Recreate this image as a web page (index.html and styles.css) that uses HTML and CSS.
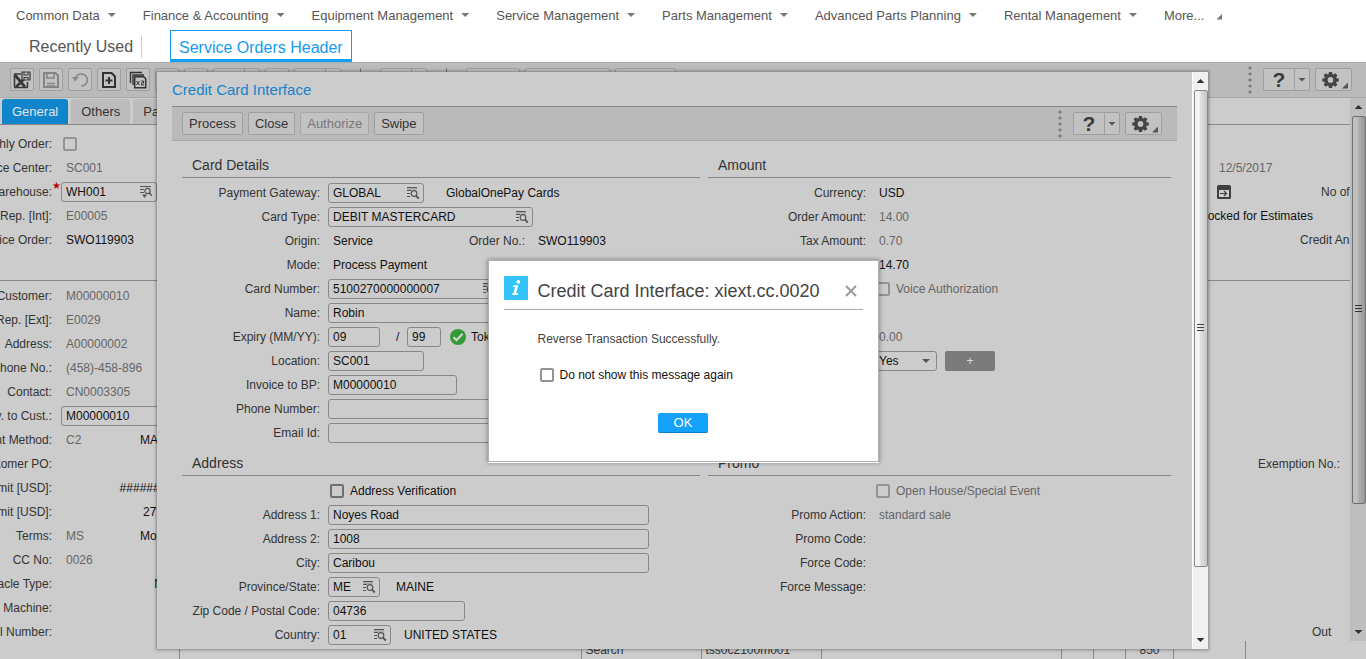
FILE: index.html
```html
<!DOCTYPE html>
<html lang="en">
<head>
<meta charset="utf-8">
<title>Service Orders Header</title>
<link rel="stylesheet" href="styles.css">
</head>
<body>
<svg class="sprite" aria-hidden="true">
  <symbol id="lookup" viewBox="0 0 14 14">
    <path d="M1 1.500h10M1 4.500h4M1 7.500h3M1 10.500h3" fill="none" stroke="#555" stroke-width="1"/>
    <path d="M1 3h10" stroke="#666" stroke-width=".6"/>
    <circle cx="8" cy="7.500" r="2.800" fill="none" stroke="#555" stroke-width="1.200"/>
    <path d="M10 9.700l2.800 2.800" stroke="#555" stroke-width="1.900"/>
  </symbol>
  <symbol id="lookup-down" viewBox="0 0 14 14">
    <path d="M1 1.500h11M1 4.500h4M1 7.500h4" fill="none" stroke="#555"/>
    <circle cx="8.500" cy="6" r="2.700" fill="none" stroke="#555" stroke-width="1.200"/>
    <path d="M10.300 8l2.500 2.800" stroke="#555" stroke-width="1.600"/>
    <path d="M3 9.500h5L5.500 13z" fill="#555"/>
  </symbol>
  <symbol id="gear" viewBox="0 0 18 18">
    <path fill="#444" fill-rule="evenodd" d="M7.400 1h3.200l.4 2.300 1.100.5 2-1.400 2.200 2.200-1.300 2 .4 1 2.400.400v3.100l-2.400.4-.4 1.100 1.300 1.900-2.200 2.300-2-1.400-1.100.500-.4 2.300H7.400L7 15.900l-1.100-.500-2 1.400-2.200-2.300L3 12.600l-.4-1.100L.3 11.100V8l2.300-.4.400-1-1.300-2 2.200-2.200 2 1.400L7 3.300zM9 6.400a3 3 0 1 0 0 6 3 3 0 0 0 0-6z"/>
  </symbol>
</svg>

<header class="top">
  <nav class="menu" aria-label="Modules">
    <a href="#common">Common Data<i class="caret"></i></a>
    <a href="#finance">Finance &amp; Accounting<i class="caret"></i></a>
    <a href="#equipment">Equipment Management<i class="caret"></i></a>
    <a href="#service">Service Management<i class="caret"></i></a>
    <a href="#parts">Parts Management<i class="caret"></i></a>
    <a href="#planning">Advanced Parts Planning<i class="caret"></i></a>
    <a href="#rental">Rental Management<i class="caret"></i></a>
    <a href="#more">More...<i class="corner"></i></a>
  </nav>
  <nav class="sessions" aria-label="Sessions">
    <a href="#recent" class="recent">Recently Used</a>
    <a href="#orders" class="session">Service Orders Header</a>
  </nav>
</header>

<main class="work">
  <div class="toolbar">
    <button class="tool" aria-label="Save and exit"><svg width="18" height="18" viewBox="0 0 18 18"><path d="M1 3h7M1 16.500h14M1.500 3v13M14.500 11v5" fill="none" stroke="#3a3a3a" stroke-width="1.600"/><path d="M2 4l10 12M12 7L3 16" fill="none" stroke="#3a3a3a" stroke-width="2.800"/><path d="M9 1h8v8H9z" fill="#c2c2c2" stroke="#3a3a3a" stroke-width="1.200"/><path d="M11 1v3h4V1M11 9V6.500h4V9" fill="none" stroke="#3a3a3a" stroke-width="1.100"/></svg></button>
    <button class="tool" aria-label="Save"><svg width="18" height="18" viewBox="0 0 18 18"><path d="M2 2h11.500L16 4.500V16H2z" fill="none" stroke="#858585" stroke-width="2"/><path d="M5 2v5h7V2M5 12.500h8M5 15h8" fill="none" stroke="#858585" stroke-width="1.500"/></svg></button>
    <button class="tool" aria-label="Undo"><svg width="18" height="18" viewBox="0 0 18 18"><path d="M4.500 7.500A6 6 0 1 1 10.500 15" fill="none" stroke="#8a8a8a" stroke-width="1.800"/><path d="M1 6h7l-4 4.500z" fill="#8a8a8a"/></svg></button>
    <button class="tool" aria-label="New"><svg width="18" height="18" viewBox="0 0 18 18"><path d="M3 2h8.500L15 5.500V16H3z" fill="none" stroke="#333" stroke-width="2"/><path d="M9 6v7M5.500 9.500h7" stroke="#333" stroke-width="2"/></svg></button>
    <button class="tool" aria-label="Duplicate"><svg width="18" height="18" viewBox="0 0 18 18"><path d="M1.500 12V1.500H13M4 14V4h11" fill="none" stroke="#333" stroke-width="1.400"/><path d="M5.700 5.700h9l2 2v9h-11z" fill="none" stroke="#333" stroke-width="1.500"/><path d="M7.500 10l3 4M10.500 10l-3 4M12.200 10h2.300v2h-2v2h2.500" fill="none" stroke="#333"/></svg></button>
    <button class="tool" aria-label="Delete"></button>
    <button class="tool" aria-label="Refresh"></button>
    <span class="split"><button aria-label="First"></button><button aria-label="First options"></button></span>
    <button class="tool" aria-label="Previous"></button>
    <span class="split"><button aria-label="Next"></button><button aria-label="Next options"></button></span>
    <i class="bar"></i>
    <span class="split"><button aria-label="Find"></button><button aria-label="Find options"></button></span>
    <i class="bar"></i>
    <button class="tool views" aria-label="Views"></button>
    <button class="tool references" aria-label="References"></button>
    <button class="tool actions" aria-label="Actions"></button>
    <div class="tail">
      <i class="dots"></i>
      <span class="split"><button class="help">?</button><button aria-label="Help options"><i class="caret"></i></button></span>
      <button class="tool settings" aria-label="Settings"><svg width="17" height="17"><use href="#gear"/></svg><i class="corner"></i></button>
    </div>
  </div>

  <div class="stage">
    <div class="page">
      <div class="tabs">
        <button class="tab on">General</button>
        <button class="tab">Others</button>
        <button class="tab">Parts</button>
      </div>
      <div class="cols first">
        <div>
          <div class="row"><label for="mo">Monthly Order:</label><input type="checkbox" id="mo" class="faint"></div>
          <div class="row"><span class="lab">Service Center:</span><span class="dim">SC001</span></div>
          <div class="row"><label for="wh">Warehouse:<b class="must">★</b></label><span class="field w96"><input id="wh" value="WH001"><button class="zoomer" aria-label="Look up"><svg width="14" height="14"><use href="#lookup-down"/></svg></button></span></div>
          <div class="row"><span class="lab">Service Rep. [Int]:</span><span class="dim">E00005</span></div>
          <div class="row"><span class="lab">Service Order:</span><span>SWO119903</span></div>
        </div>
        <div>
          <div class="row"></div>
          <div class="row side"><span class="dim date">12/5/2017</span></div>
          <div class="row side"><button class="cal" aria-label="Open calendar"><svg width="14" height="14" viewBox="0 0 14 14"><rect width="14" height="14" rx="1.500" fill="#3f3f3f"/><path d="M2 5h10v7H2z" fill="#ccc"/><path d="M3 8.500h6M7 6l2.500 2.500L7 11" fill="none" stroke="#3f3f3f" stroke-width="1.200"/></svg></button><span class="lines">No of Lines:</span></div>
          <div class="row side">Blocked for Estimates</div>
          <div class="row side"><span class="analyst">Credit Analyst:</span></div>
        </div>
      </div>
      <div class="cols">
        <div>
          <div class="row"><span class="lab">Customer:</span><span class="dim">M00000010</span></div>
          <div class="row"><span class="lab">Service Rep. [Ext]:</span><span class="dim">E0029</span></div>
          <div class="row"><span class="lab">Address:</span><span class="dim">A00000002</span></div>
          <div class="row"><span class="lab">Phone No.:</span><span class="dim">(458)-458-896</span></div>
          <div class="row"><span class="lab">Contact:</span><span class="dim">CN0003305</span></div>
          <div class="row"><label for="inv">Inv. to Cust.:</label><span class="field w129"><input id="inv" value="M00000010"></span></div>
          <div class="row"><span class="lab">Payment Method:</span><span class="dim code">C2</span><span>MASTERCARD</span></div>
          <div class="row"><span class="lab">Customer PO:</span></div>
          <div class="row"><span class="lab">Credit Limit [USD]:</span><span class="sum">########</span></div>
          <div class="row"><span class="lab">Order Limit [USD]:</span><span class="sum">27.00</span></div>
          <div class="row"><span class="lab">Terms:</span><span class="dim code">MS</span><span>Monthly</span></div>
          <div class="row"><span class="lab">CC No:</span><span class="dim">0026</span></div>
          <div class="row"><span class="lab">Receptacle Type:</span><span class="sum">Not</span></div>
          <div class="row"><span class="lab">Machine:</span></div>
          <div class="row"><span class="lab">Serial Number:</span></div>
        </div>
        <div class="rest">
          <span class="exempt">Exemption No.:</span>
          <span class="out">Out</span>
        </div>
      </div>
    </div>
    <div class="scroll outer"><i class="up"></i><i class="thumb"></i><i class="free"></i><i class="down"></i></div>
  </div>

  <table class="status"><tr><td class="c1"></td><td class="c2"></td><td class="c3">Search</td><td class="c3">tss0c2100m001</td><td class="c4"></td><td class="c5"></td><td class="c5"></td><td class="c6">850</td><td class="c7"></td><td class="c8"></td></tr></table>

  <section class="modal" aria-label="Credit Card Interface">
    <div class="modal-body">
      <h1>Credit Card Interface</h1>
      <div class="toolbar inner">
        <button class="tool text">Process</button>
        <button class="tool text">Close</button>
        <button class="tool text" disabled>Authorize</button>
        <button class="tool text">Swipe</button>
        <div class="tail">
          <i class="dots"></i>
          <span class="split"><button class="help">?</button><button aria-label="Help options"><i class="caret"></i></button></span>
          <button class="tool settings" aria-label="Settings"><svg width="17" height="17"><use href="#gear"/></svg><i class="corner"></i></button>
        </div>
      </div>
      <div class="groups">
        <section class="group card">
          <h2>Card Details</h2>
          <div class="row"><label for="gw">Payment Gateway:</label><span class="field w96"><input id="gw" value="GLOBAL"><button class="zoomer" aria-label="Look up"><svg width="14" height="14"><use href="#lookup"/></svg></button></span><span class="note far">GlobalOnePay Cards</span></div>
          <div class="row"><label for="ct">Card Type:</label><span class="field w205"><input id="ct" value="DEBIT MASTERCARD"><button class="zoomer" aria-label="Look up"><svg width="14" height="14"><use href="#lookup"/></svg></button></span></div>
          <div class="row"><span class="lab">Origin:</span><span class="plain origin">Service</span><span class="ordlab">Order No.:</span><span>SWO119903</span></div>
          <div class="row"><span class="lab">Mode:</span><span class="plain">Process Payment</span></div>
          <div class="row"><label for="cn">Card Number:</label><span class="field w172"><input id="cn" value="5100270000000007"><button class="zoomer" aria-label="Look up"><svg width="14" height="14"><use href="#lookup"/></svg></button></span></div>
          <div class="row"><label for="nm">Name:</label><span class="field w205"><input id="nm" value="Robin"></span></div>
          <div class="row"><label for="em">Expiry (MM/YY):</label><span class="field w52"><input id="em" value="09"></span><span class="slash">/</span><span class="field w34"><input aria-label="Expiry year" value="99"></span><svg class="ok-mark" width="16" height="16" viewBox="0 0 16 16"><circle cx="8" cy="8" r="8" fill="#339a38"/><path d="M3.500 8.200l3 3 6-6.400" fill="none" stroke="#d5d5d5" stroke-width="2"/></svg><span>Token</span></div>
          <div class="row"><label for="lo">Location:</label><span class="field w96"><input id="lo" value="SC001"></span></div>
          <div class="row"><label for="bp">Invoice to BP:</label><span class="field w129"><input id="bp" value="M00000010"></span></div>
          <div class="row"><label for="ph">Phone Number:</label><span class="field w205"><input id="ph"></span></div>
          <div class="row"><label for="ei">Email Id:</label><span class="field w205"><input id="ei"></span></div>
        </section>
        <section class="group pay">
          <h2>Amount</h2>
          <div class="row"><span class="lab">Currency:</span><span>USD</span></div>
          <div class="row"><span class="lab">Order Amount:</span><span class="dim">14.00</span></div>
          <div class="row"><span class="lab">Tax Amount:</span><span class="dim">0.70</span></div>
          <div class="row"><span class="lab">Total:</span><span>14.70</span></div>
          <div class="row boxed"><input type="checkbox" id="va" class="faint"><label for="va" class="dim">Voice Authorization</label></div>
          <div class="row"></div>
          <div class="row"><span class="lab">Balance:</span><span class="dim">0.00</span></div>
          <div class="row choice"><label for="yn">Print:</label><span class="drop"><select id="yn"><option>Yes</option><option>No</option></select><i class="caret"></i></span><button class="plus">+</button></div>
        </section>
        <section class="group card">
          <h2>Address</h2>
          <div class="row boxed"><input type="checkbox" id="av"><label for="av">Address Verification</label></div>
          <div class="row"><label for="a1">Address 1:</label><span class="field w321"><input id="a1" value="Noyes Road"></span></div>
          <div class="row"><label for="a2">Address 2:</label><span class="field w321"><input id="a2" value="1008"></span></div>
          <div class="row"><label for="cy">City:</label><span class="field w321"><input id="cy" value="Caribou"></span></div>
          <div class="row"><label for="ps">Province/State:</label><span class="field w52"><input id="ps" value="ME"><button class="zoomer" aria-label="Look up"><svg width="14" height="14"><use href="#lookup"/></svg></button></span><span class="note">MAINE</span></div>
          <div class="row"><label for="zp">Zip Code / Postal Code:</label><span class="field w137"><input id="zp" value="04736"></span></div>
          <div class="row"><label for="co">Country:</label><span class="field w63"><input id="co" value="01"><button class="zoomer" aria-label="Look up"><svg width="14" height="14"><use href="#lookup"/></svg></button></span><span class="note near">UNITED STATES</span></div>
        </section>
        <section class="group pay">
          <h2>Promo</h2>
          <div class="row boxed"><input type="checkbox" id="oh" class="faint"><label for="oh" class="dim">Open House/Special Event</label></div>
          <div class="row"><span class="lab">Promo Action:</span><span class="dim">standard sale</span></div>
          <div class="row"><span class="lab">Promo Code:</span></div>
          <div class="row"><span class="lab">Force Code:</span></div>
          <div class="row"><span class="lab">Force Message:</span></div>
        </section>
      </div>
    </div>
    <div class="scroll"><i class="up"></i><i class="thumb"></i><i class="free"></i><i class="down"></i></div>
  </section>

  <div class="center">
    <section class="message" role="dialog" aria-labelledby="mt">
      <div class="mhead">
        <svg width="24" height="24" viewBox="0 0 24 24"><rect width="24" height="24" rx="1" fill="#33c3fb"/><circle cx="14.300" cy="5.800" r="1.900" fill="#fff"/><path d="M9.300 9.200h5l-2.200 8h2.300l-.6 1.800H8l.5-1.800h1l1.600-6.200H8.800z" fill="#fff"/></svg>
        <h3 id="mt">Credit Card Interface: xiext.cc.0020</h3>
        <button class="close" aria-label="Close"><svg width="12" height="12" viewBox="0 0 12 12"><path d="M1 1l10 10M11 1L1 11" stroke="#999" stroke-width="1.900"/></svg></button>
      </div>
      <p>Reverse Transaction Successfully.</p>
      <div class="again"><input type="checkbox" id="ds"><label for="ds">Do not show this message again</label></div>
      <button class="ok">OK</button>
    </section>
  </div>
</main>
</body>
</html>
```
FILE: styles.css
```css
* { box-sizing: border-box; }
html, body { height: 100%; }
body {
  margin: 0;
  display: flex;
  flex-direction: column;
  overflow: hidden;
  background: #fff;
  color: #111;
  font: 12px/24px "Liberation Sans", Arial, sans-serif;
}
button, input, select { font: inherit; color: inherit; margin: 0; padding: 0; }
button { cursor: pointer; }
a { text-decoration: none; color: #555; }
h1, h2, h3, p { margin: 0; font-weight: normal; }
svg { display: block; flex: none; }
.sprite { position: absolute; width: 0; height: 0; }

/* header */
.top { flex: none; border-bottom: 1px solid #a9acaf; }
.menu { display: flex; gap: 27px; height: 30px; padding-left: 16px; font-size: 13px; line-height: 31px; white-space: nowrap; }
.menu a { display: flex; align-items: center; gap: 8px; }
.caret { flex: none; width: 8px; height: 4px; background: #777; clip-path: polygon(0 0, 100% 0, 50% 100%); }
.corner { flex: none; width: 6px; height: 6px; background: #777; clip-path: polygon(100% 0, 100% 100%, 0 100%); }
.menu .corner { margin: 3px 0 0 4px; }
.sessions { display: flex; align-items: center; height: 32px; padding-left: 29px; font-size: 16px; }
.recent { margin-top: 2px; padding-right: 8px; border-right: 1px solid #ccc; line-height: 22px; }
.session { height: 32px; margin-left: 28px; padding: 5px 8px 0; border: 1px solid #14a0f4; border-bottom-width: 3px; color: #149bf0; line-height: 24px; }

/* work area */
.work { position: relative; flex: 1; min-height: 0; display: flex; flex-direction: column; background: #ccc; }
.toolbar { flex: none; display: flex; align-items: center; gap: 5px; height: 35px; padding: 0 14px 1px 10px; background: #bababa; border-bottom: 1px solid #a8a8a8; }
.tool { display: flex; align-items: center; justify-content: center; width: 24px; height: 23px; border: 1px solid #9f9f9f; border-radius: 2px; background: #c2c2c2; color: #333; }
.tool.text { width: auto; padding: 0 6px; font-size: 13px; }
.tool:disabled { color: #777; border-color: #a8a8a8; }
.tool.views { width: 54px; }
.tool.references { width: 85px; }
.tool.actions { width: 61px; }
.tool.settings { width: 37px; justify-content: flex-end; gap: 3px; padding-right: 3px; }
.settings .corner { margin-top: 12px; background: #555; }
.split { display: flex; height: 23px; border: 1px solid #9f9f9f; border-radius: 2px; background: #c2c2c2; }
.split button { border: 0; background: none; width: 30px; display: flex; align-items: center; justify-content: center; }
.split button + button { width: 15px; border-left: 1px solid #9f9f9f; }
.split .help { font: bold 21px/21px "Liberation Sans", Arial, sans-serif; color: #3b3b3b; }
.split .caret { background: #555; }
.bar { width: 1px; height: 23px; margin: 0 14px; background: #777; }
.tail { display: flex; align-items: center; gap: 5px; margin-left: auto; }
.dots { width: 4px; height: 28px; margin-right: 6px; background: radial-gradient(circle at 2px 2px, #7a7a7a 1px, transparent 2px) 0 0 / 4px 6px; }

.stage { flex: 1; min-height: 0; display: flex; }
.page { flex: 1; min-width: 0; overflow: hidden; }
.tabs { display: flex; gap: 3px; height: 27px; padding: 1px 0 0 2px; border-bottom: 1px solid #888; }
.tab { height: 25px; padding: 0 10px; border: 0; border-radius: 3px 3px 0 0; background: #bcbcbc; color: #333; font-size: 13px; }
.tab.on { background: #1085cc; color: #e4e4e4; }
.cols { display: grid; grid-template-columns: 1fr 153px; padding-top: 3px; }
.cols.first { padding: 7px 0 28px; border-bottom: 1px solid #888; }
.row { display: flex; align-items: center; height: 24px; white-space: nowrap; }
.row .lab, .row label { display: flex; justify-content: flex-end; flex: none; color: #333; }
.page .lab, .page label { width: 52px; margin-right: 14px; }
.page .field { margin-left: -5px; }
.page input[type="checkbox"] { margin-left: -3px; }
.page .must { width: 0; margin-top: -6px; color: #b00; font-size: 10px; font-weight: normal; }
.dim, .row label.dim { color: #666; }
.code { width: 74px; }
.sum { width: 107px; display: flex; justify-content: flex-end; }
.side .date { margin-left: 22px; }
.cal { margin-left: 20px; border: 0; background: none; }
.side .lines { margin-left: 90px; color: #333; }
.side .analyst { margin-left: 103px; color: #333; }
.rest { display: flex; flex-direction: column; gap: 144px; padding-top: 168px; color: #333; }
.exempt { margin-left: 61px; }
.out { margin-left: 115px; }

/* form controls */
.field { display: flex; align-items: center; flex: none; height: 20px; border: 1px solid #888; border-radius: 3px; background: #ccc; }
.field input { flex: 1; min-width: 0; height: 18px; padding-left: 4px; border: 0; outline: 0; background: none; }
.zoomer { flex: none; margin-right: 3px; border: 0; background: none; }
.w34 { width: 34px; } .w52 { width: 52px; } .w63 { width: 63px; } .w96 { width: 96px; }
.w129 { width: 129px; } .w137 { width: 137px; } .w172 { width: 172px; } .w205 { width: 205px; } .w321 { width: 321px; }
input[type="checkbox"] { appearance: none; flex: none; width: 14px; height: 14px; border: 2px solid #707070; border-radius: 2px; }
input[type="checkbox"].faint, .again input[type="checkbox"] { border-color: #949494; }

.status { flex: none; width: 100%; height: 18px; table-layout: fixed; border-collapse: collapse; line-height: 18px; color: #333; }
.status td { padding: 0 0 0 4px; border-right: 1px solid #888; white-space: nowrap; overflow: hidden; }
.status td:last-child { border-right: 0; }
.c1 { width: 179px; } .c2 { width: 402px; } .c3 { width: 120px; } .c4 { width: 240px; } .c5 { width: 32px; } .c6 { width: 48px; } .c7 { width: 72px; }
.status .c6 { padding-left: 14px; }

/* credit card window */
.modal { position: absolute; inset: 9px 158px 10px 157px; display: flex; background: #ccc; box-shadow: 0 0 3px 1px rgba(0, 0, 0, .35); }
.modal-body { flex: 1; min-width: 0; overflow: hidden; padding: 0 15px; }
.modal h1 { height: 34px; color: #1583cb; font-size: 15px; line-height: 36px; }
.toolbar.inner { padding: 0 15px 0 10px; border-top: 1px solid #888; }
.groups { display: grid; grid-template-columns: 518fr 463fr; gap: 0 8px; padding: 6px 6px 0 10px; }
.group h2 { padding: 6px 10px 0; margin-bottom: 3px; border-bottom: 1px solid #888; color: #333; font-size: 14px; line-height: 24px; }
.card .lab, .card label { width: 138px; margin-right: 8px; }
.pay .lab, .pay label { width: 158px; margin-right: 13px; }
.group .boxed label { width: auto; margin: 0 0 0 6px; }
.card .boxed label { color: #111; }
.card .boxed { padding-left: 148px; }
.pay .boxed { padding-left: 168px; }
.plain { padding-left: 5px; }
.origin { width: 141px; }
.ordlab { margin-right: 13px; color: #333; }
.note { margin-left: 16px; }
.note.far { margin-left: 22px; }
.note.near { margin-left: 13px; }
.slash { width: 27px; padding-left: 16px; }
.ok-mark { margin: 0 5px 0 9px; }
.pay .choice label { margin-right: 8px; }
.drop { position: relative; width: 63px; height: 20px; }
.drop select { display: block; width: 100%; height: 20px; padding-left: 4px; appearance: none; border: 1px solid #888; border-radius: 3px; background: #ccc; line-height: 18px; }
.drop .caret { position: absolute; right: 7px; top: 8px; background: #555; }
.plus { width: 50px; height: 20px; margin-left: 8px; border: 0; border-radius: 2px; background: #7b7b7b; color: #ddd; line-height: 20px; }

/* scroll bars */
.scroll { flex: none; width: 16px; display: flex; flex-direction: column; align-items: center; background: #f0f0f0; border-left: 1px solid #fff; }
.up, .down { flex: none; width: 8px; height: 4px; margin: 7px 0; background: #333; clip-path: polygon(50% 0, 100% 100%, 0 100%); }
.down { clip-path: polygon(0 0, 100% 0, 50% 100%); }
.thumb { flex: 477; width: 14px; border: 1px solid #888; border-radius: 2px; background: repeating-linear-gradient(#444 0 1px, transparent 1px 3px) center / 7px 9px no-repeat, linear-gradient(90deg, #f4f4f4 0 35%, #e2e2e2 45%, #c4c6c9); }
.free { flex: 64; }
.scroll.outer { background: #bebebe; border-color: #b8b8b8; }
.outer .thumb { flex: 389; border-color: #707070; background: repeating-linear-gradient(#333 0 1px, transparent 1px 3px) center / 7px 9px no-repeat, linear-gradient(90deg, #bfbfbf 0 35%, #b0b0b1 45%, #96979a); }
.outer .free { flex: 120; }

/* message */
.center { position: absolute; inset: 0; display: flex; align-items: center; justify-content: center; }
.message { width: 391px; padding: 15px 15px 17px; background: #fff; border: 1px solid #b0b0b0; box-shadow: 0 1px 0 #fff, 0 0 4px 1px rgba(0, 0, 0, .3); }
.mhead { display: flex; align-items: flex-start; height: 34px; border-bottom: 1px solid #aaa; }
.mhead h3 { flex: 1; margin-left: 10px; color: #444; font-size: 18px; line-height: 30px; }
.close { margin: 9px 6px 0 0; border: 0; background: none; }
.message p { margin: 17px 0 0 34px; color: #444; }
.again { display: flex; align-items: center; gap: 6px; margin: 12px 0 0 36px; }
.ok { display: block; width: 50px; height: 20px; margin: 26px auto 11px; border: 0; border-bottom: 1px solid #0d7cc6; border-radius: 2px; background: #14a2fb; color: #fff; font-size: 13px; line-height: 19px; }
```
